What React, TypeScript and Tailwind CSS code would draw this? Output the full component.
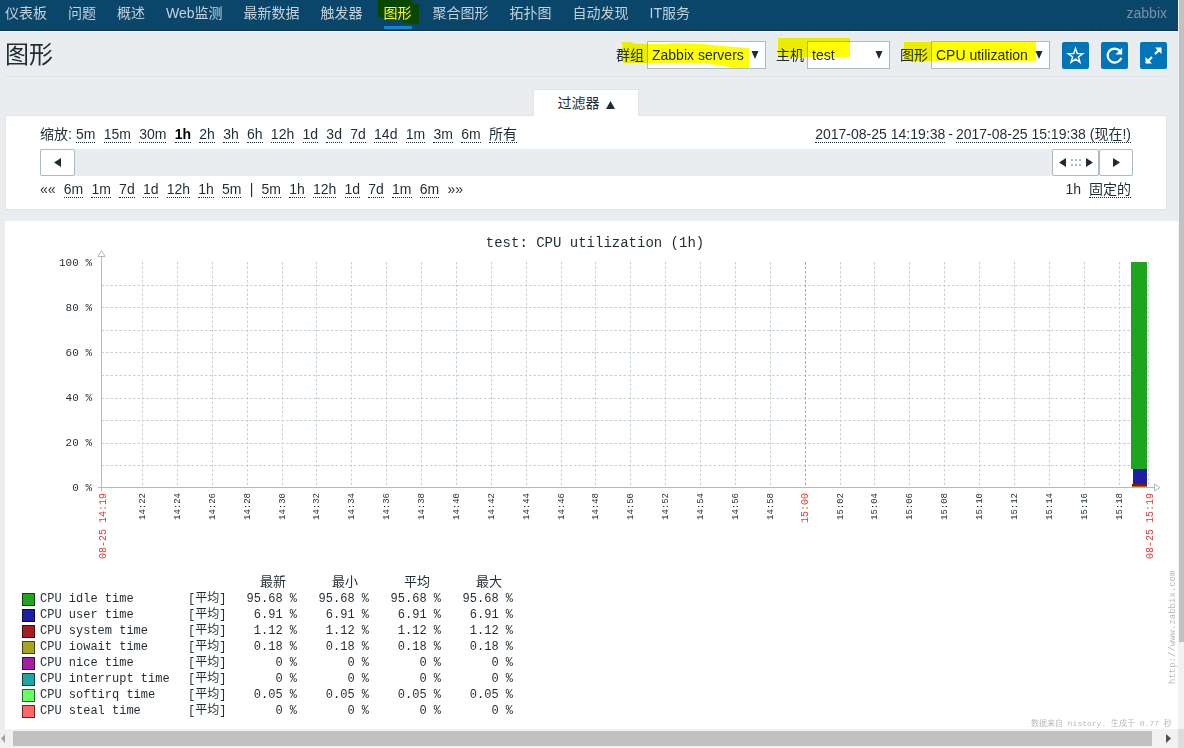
import { clsx } from "clsx";

const navItems = [
  "仪表板",
  "问题",
  "概述",
  "Web监测",
  "最新数据",
  "触发器",
  "图形",
  "聚合图形",
  "拓扑图",
  "自动发现",
  "IT服务",
];

const zoomLevels = ["5m", "15m", "30m", "1h", "2h", "3h", "6h", "12h", "1d", "3d", "7d", "14d", "1m", "3m", "6m", "所有"];
const stepsBack = ["6m", "1m", "7d", "1d", "12h", "1h", "5m"];
const stepsForward = ["5m", "1h", "12h", "1d", "7d", "1m", "6m"];

const legend = [
  { name: "CPU idle time", color: "bg-[#1ea51e]", value: "95.68 %" },
  { name: "CPU user time", color: "bg-[#1e1ea5]", value: "6.91 %" },
  { name: "CPU system time", color: "bg-[#a51e1e]", value: "1.12 %" },
  { name: "CPU iowait time", color: "bg-[#a5a51e]", value: "0.18 %" },
  { name: "CPU nice time", color: "bg-[#a51ea5]", value: "0 %" },
  { name: "CPU interrupt time", color: "bg-[#1ea5a5]", value: "0 %" },
  { name: "CPU softirq time", color: "bg-[#66ff66]", value: "0.05 %" },
  { name: "CPU steal time", color: "bg-[#ff6666]", value: "0 %" },
];

const mono = "font-['Liberation_Mono','Noto_Sans_CJK_SC',monospace]";

function TopNav() {
  return (
    <nav className="flex h-8 items-start justify-between border-b border-white bg-[#0a466a] pr-[11px] pl-[5px] text-[#c3d1da] shadow-[inset_0_-1px_0_#08344f]">
      <ul className="flex gap-[21px]">
        {navItems.map((item) => (
          <li key={item} className="relative">
            <a
              href="#"
              className={clsx(
                "block h-[29px] pt-[3px] leading-5 whitespace-nowrap",
                item === "图形" && "border-b-3 border-[#1385cf] text-white",
              )}
            >
              {item}
            </a>
            {item === "图形" && (
              <svg
                className="pointer-events-none absolute top-0 -left-[6px] mix-blend-multiply"
                width="41"
                height="25"
                viewBox="0 0 41 25"
                aria-hidden="true"
              >
                <path d="M0 0H34L35 4H41V24L26 23L24 20L10 19L0 17Z" fill="#ff0" />
              </svg>
            )}
          </li>
        ))}
      </ul>
      <a href="#" className="pt-[3px] leading-5 text-[#7893a5]">
        zabbix
      </a>
    </nav>
  );
}

type PickerProps = {
  id: string;
  label: string;
  value: string;
  width: string;
  marker: string;
};

function Picker({ id, label, value, width, marker }: PickerProps) {
  return (
    <div className="relative flex items-center gap-[3px]">
      <label htmlFor={id} className="leading-5">
        {label}
      </label>
      <div className="relative">
        <select
          id={id}
          defaultValue={value}
          className={clsx("block h-7 appearance-none border border-[#acbbc2] bg-white pl-1 text-sm", width)}
        >
          <option>{value}</option>
        </select>
        <svg className="pointer-events-none absolute top-[10px] right-[7px]" width="8" height="8" aria-hidden="true">
          <path d="M0.5 0H7.5L4 8Z" fill="#1f2c33" />
        </svg>
      </div>
      <svg
        className="pointer-events-none absolute -top-[3px] left-0 mix-blend-multiply"
        width="150"
        height="32"
        aria-hidden="true"
      >
        <path d={marker} fill="#ff0" />
      </svg>
    </div>
  );
}

const iconButton = "flex size-[27px] items-center justify-center rounded-xs bg-[#0275b8] text-white";

function PageHeader() {
  return (
    <header className="mr-[11px] ml-[5px] flex h-[45px] items-start justify-between border-b border-[#dfe4e7]">
      <h1 className="pt-2 text-2xl leading-[30px]">图形</h1>
      <div className="flex items-center gap-3 pt-[9px]">
        <div className="flex gap-[10px]">
          <Picker
            id="group"
            label="群组"
            value="Zabbix servers"
            width="w-[119px]"
            marker="M6 4L14 4L20 6H47L62 5L87 6L107 8L133 10V30H121L87 25L60 25L7 25Z"
          />
          <Picker id="host" label="主机" value="test" width="w-[83px]" marker="M2 0H74V19H2Z" />
          <Picker
            id="graph"
            label="图形"
            value="CPU utilization"
            width="w-[119px]"
            marker="M4 4H136V23H4Z"
          />
        </div>
        <button type="button" aria-label="收藏" className={iconButton}>
          <svg width="19" height="19" viewBox="0 0 19 19" fill="none" stroke="currentColor" strokeWidth="1.4">
            <path d="M9.5 2.4L11.3 7.5L16.8 7.6L12.4 10.9L14 16.2L9.5 13.1L5 16.2L6.6 10.9L2.2 7.6L7.7 7.5Z" />
          </svg>
        </button>
        <button type="button" aria-label="刷新" className={iconButton}>
          <svg width="19" height="19" viewBox="0 0 19 19" fill="none">
            <path d="M14.8 4.8A7 7 0 1 0 16.3 11.8" stroke="currentColor" strokeWidth="2.2" />
            <path d="M17.2 1.8V8.6H10.4Z" fill="currentColor" />
          </svg>
        </button>
        <button type="button" aria-label="全屏" className={iconButton}>
          <svg width="19" height="19" viewBox="0 0 19 19" fill="none">
            <path d="M17.5 1.5V8L11 1.5ZM1.5 17.5V11L8 17.5Z" fill="currentColor" />
            <path d="M15.5 3.5L11 8M3.5 15.5L8 11" stroke="currentColor" strokeWidth="2.2" />
          </svg>
        </button>
      </div>
    </header>
  );
}

function DottedLink({ text, active }: { text: string; active?: boolean }) {
  return (
    <a
      href="#"
      className={clsx(
        "block border-b border-dotted border-[#1f2c33] leading-4 whitespace-nowrap",
        active && "font-bold text-black",
      )}
    >
      {text}
    </a>
  );
}

const scrollButton = "flex h-[27px] items-center justify-center rounded-xs border border-[#acbbc2] bg-white";

function TimeFilter() {
  return (
    <section className="mr-[11px] ml-[5px] pt-3">
      <button
        type="button"
        className="relative z-10 mx-auto -mb-px flex h-[27px] w-[106px] items-center justify-center gap-[6px] border border-b-0 border-[#dfe4e7] bg-white"
      >
        过滤器
        <svg width="9" height="8" className="mt-1" aria-hidden="true">
          <path d="M4.5 0L9 8H0Z" fill="#1f2c33" />
        </svg>
      </button>
      <div className="border border-[#dfe4e7] bg-white pt-[10px] pr-[33px] pb-[11px] pl-[34px]">
        <div className="flex items-start justify-between pr-[2px]">
          <div className="flex w-[477px] gap-1">
            <span className="leading-4">缩放:</span>
            <div className="flex flex-1 justify-between">
              {zoomLevels.map((level) => (
                <DottedLink key={level} text={level} active={level === "1h"} />
              ))}
            </div>
          </div>
          <div className="flex gap-[3px]">
            <DottedLink text="2017-08-25 14:19:38" />
            <span className="leading-4">-</span>
            <DottedLink text="2017-08-25 15:19:38 (现在!)" />
          </div>
        </div>

        <div className="mt-[6px] flex bg-[#e9edf0]">
          <button type="button" aria-label="后退" className={clsx(scrollButton, "w-[35px]")}>
            <svg width="7" height="9">
              <path d="M7 0V9L0 4.5Z" fill="#1f2c33" />
            </svg>
          </button>
          <button type="button" aria-label="时间范围" className={clsx(scrollButton, "ml-auto w-[47px]")}>
            <svg width="34" height="9">
              <path d="M7 0V9L0 4.5ZM27 0V9L34 4.5Z" fill="#1f2c33" />
              <path d="M12 2H22M12 7H22" stroke="#acbbc2" strokeWidth="2" strokeDasharray="2 2" />
            </svg>
          </button>
          <button type="button" aria-label="前进" className={clsx(scrollButton, "w-[34px]")}>
            <svg width="7" height="9">
              <path d="M0 0V9L7 4.5Z" fill="#1f2c33" />
            </svg>
          </button>
        </div>

        <div className="mt-[5px] flex items-start justify-between pr-[2px]">
          <div className="flex w-[423px] justify-between leading-4">
            <span>««</span>
            {stepsBack.map((step) => (
              <DottedLink key={step} text={step} />
            ))}
            <span>|</span>
            {stepsForward.map((step) => (
              <DottedLink key={step} text={step} />
            ))}
            <span>»»</span>
          </div>
          <div className="flex gap-2 leading-4">
            <span>1h</span>
            <DottedLink text="固定的" />
          </div>
        </div>
      </div>
    </section>
  );
}

const left = 96.5;
const bottom = 267;
const top = 41;
const firstTick = 137;
const tickStep = 34.88;

function tickLabel(index: number) {
  const minutes = 22 + index * 2;
  const hour = 14 + Math.floor(minutes / 60);
  return `${hour}:${String(minutes % 60).padStart(2, "0")}`;
}

function SideLabel({ x, text, red }: { x: number; text: string; red?: boolean }) {
  return (
    <text
      transform={`translate(${x} 272) rotate(-90)`}
      textAnchor="end"
      className={red ? "fill-[#e33734] text-[10px]" : "fill-[#1f2c33] text-[9px]"}
    >
      {text}
    </text>
  );
}

function CpuChart() {
  const ticks = Array.from({ length: 29 }, (_, i) => i);
  const rows = Array.from({ length: 9 }, (_, i) => i + 1);

  return (
    <svg viewBox="0 0 1173 354" className={clsx("block w-full", mono)} role="img" aria-label="CPU utilization">
      <text x="590" y="26" textAnchor="middle" className="fill-[#1f2c33] text-sm">
        test: CPU utilization (1h)
      </text>

      <g stroke="#c5d1d6" strokeDasharray="2.5 2">
        {rows.map((row) => {
          const y = Math.round(bottom - row * 22.6) + 0.5;
          return <path key={row} d={`M${left} ${y}H1144`} />;
        })}
        {ticks.map((i) => {
          const x = Math.round(firstTick + i * tickStep);
          return <path key={i} d={`M${x + 0.5} ${top}V${bottom}`} stroke={i === 19 ? "#9aa9b0" : undefined} />;
        })}
        <path d={`M1143.5 ${top}V${bottom}`} />
      </g>

      <g fill="none" stroke="#acbbc2">
        <path d={`M${left} 36V270M93 266.5H1149`} />
        <path d="M93 35.5L96.5 29.5L100 35.5ZM1149.5 263L1155 266.5L1149.5 270Z" fill="#fff" />
      </g>

      <rect x="1126" y="41" width="16" height="207" fill="#1ea51e" />
      <rect x="1128" y="248" width="14" height="15" fill="#1e1ea5" />
      <rect x="1127" y="263" width="15" height="2" fill="#8b1313" />
      <rect x="1127" y="265" width="15" height="1" fill="#a5701e" />

      {[100, 80, 60, 40, 20, 0].map((percent, i) => (
        <text key={percent} x="87" y={45 + i * 45} textAnchor="end" className="fill-[#1f2c33] text-[11px]">
          {percent} %
        </text>
      ))}

      <SideLabel x={101} text="08-25 14:19" red />
      {ticks.map((i) => (
        <SideLabel key={i} x={Math.round(firstTick + i * tickStep) + 3} text={tickLabel(i)} red={i === 19} />
      ))}
      <SideLabel x={1148} text="08-25 15:19" red />
    </svg>
  );
}

function Legend() {
  const columns = ["最新", "最小", "平均", "最大"];
  return (
    <table className={clsx("ml-[17px] w-[491px] table-fixed text-xs leading-4", mono)}>
      <thead>
        <tr>
          <th className="w-[166px]" />
          <th className="w-[37px]" />
          {columns.map((column) => (
            <th key={column} className="h-4 w-[72px] p-0 pr-[11px] text-right text-[13px] leading-4 font-normal">
              {column}
            </th>
          ))}
        </tr>
      </thead>
      <tbody>
        {legend.map((item) => (
          <tr key={item.name}>
            <td className="h-4 p-0">
              <div className="flex items-center gap-[5px] whitespace-pre">
                <span className={clsx("size-[13px] border border-black/60", item.color)} />
                {item.name}
              </div>
            </td>
            <td className="p-0 whitespace-nowrap">[平均]</td>
            {columns.map((column) => (
              <td key={column} className="p-0 text-right whitespace-nowrap">
                {item.value}
              </td>
            ))}
          </tr>
        ))}
      </tbody>
    </table>
  );
}

function GraphPanel() {
  return (
    <section className="relative mt-[11px] ml-[5px] bg-white pb-[10px]">
      <CpuChart />
      <Legend />
      <svg
        className={clsx("absolute right-0 bottom-0 fill-[#b9b9b9]", mono)}
        width="150"
        height="170"
        aria-hidden="true"
      >
        <text transform="translate(147 125) rotate(-90)" className="text-[9px]">
          http://www.zabbix.com
        </text>
        <text x="3" y="167" className="text-[8px]">
          数据来自 history. 生成于 0.77 秒
        </text>
      </svg>
    </section>
  );
}

export default function App() {
  return (
    <div className="bg-[#e9edf0] font-['Liberation_Sans','Noto_Sans_CJK_SC',sans-serif] text-sm text-[#1f2c33]">
      <div className="flex">
        <main className="min-w-0 flex-1">
          <TopNav />
          <PageHeader />
          <TimeFilter />
          <GraphPanel />
        </main>
        <div className="w-[6px] bg-[#f1f1f1] pl-[1px]">
          <div className="h-[88%] bg-[#c1c1c1]" />
        </div>
      </div>
      <div className="flex h-[19px] bg-[#dcdcdc]">
        <div className="flex flex-1 items-center bg-[#f1f1f1]">
          <svg width="13" height="9" aria-hidden="true">
            <path d="M5 0V9L1 4.5Z" fill="#a3a3a3" />
          </svg>
          <div className="h-[15px] flex-1 bg-[#c1c1c1]" />
          <svg width="26" height="9" aria-hidden="true">
            <path d="M14 0V9L19 4.5Z" fill="#505050" />
          </svg>
        </div>
        <div className="w-[6px]" />
      </div>
    </div>
  );
}
